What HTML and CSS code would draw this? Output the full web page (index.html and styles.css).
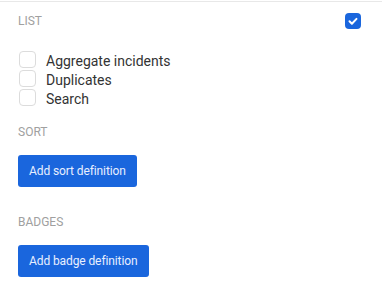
FILE: index.html
```html
<!DOCTYPE html>
<html lang="en">
<head>
  <meta charset="UTF-8">
  <meta name="viewport" content="width=device-width, initial-scale=1.0">
  <title>List settings</title>
  <link rel="stylesheet" href="styles.css">
</head>
<body>

<div class="panel">
  <!-- List section -->
  <div class="section-head">
    <span class="label">List</span>
    <span class="check checked">
      <svg viewBox="0 0 16 16" width="16" height="16"><path d="M4.5 8.3l2.4 2.4 4.6-4.8" fill="none" stroke="#fff" stroke-width="2" stroke-linecap="round" stroke-linejoin="round"/></svg>
    </span>
  </div>

  <div class="options">
    <label class="option"><span class="check"></span>Aggregate incidents</label>
    <label class="option"><span class="check"></span>Duplicates</label>
    <label class="option"><span class="check"></span>Search</label>
  </div>

  <!-- Sort section -->
  <div class="label sort-label">Sort</div>
  <button class="btn">Add sort definition</button>

  <!-- Badges section -->
  <div class="label badge-label">Badges</div>
  <button class="btn">Add badge definition</button>
</div>

</body>
</html>
```

FILE: styles.css
```css
body {
  margin: 0;
  font-family: Roboto, "Noto Sans", sans-serif;
  background: #fff;
}
.panel {
  border-top: 1px solid #e8e8e8;
  margin-top: 1px;
  padding: 0 21px 0 18px;
}
.section-head {
  display: flex;
  justify-content: space-between;
  align-items: center;
  height: 38px;
}
.label {
  font-size: 12px;
  line-height: 14px;
  color: #a0a0a0;
  text-transform: uppercase;
}
.check {
  display: inline-flex;
  align-items: center;
  justify-content: center;
  box-sizing: border-box;
  width: 16px;
  height: 16px;
  border: 1px solid #dcdcdc;
  border-radius: 4px;
  background: #fff;
}
.check.checked {
  border: none;
  background: #1a66dd;
}
.options {
  display: flex;
  flex-direction: column;
  margin-top: 11px;
}
.option {
  display: flex;
  align-items: center;
  gap: 10px;
  height: 19px;
  font-size: 14px;
  color: #333;
  padding-left: 1px;
}
.option .check {
  width: 17px;
  height: 17px;
  margin-top: -2px;
}
.sort-label {
  margin-top: 17px;
}
.badge-label {
  margin-top: 28px;
}
.btn {
  display: block;
  height: 32px;
  margin-top: 16px;
  padding: 0 11px;
  border: none;
  border-radius: 3px;
  background: #1a66dd;
  color: #e8efff;
  font-family: Roboto, sans-serif;
  font-size: 12px;
  letter-spacing: -0.1px;
  cursor: pointer;
}
```
